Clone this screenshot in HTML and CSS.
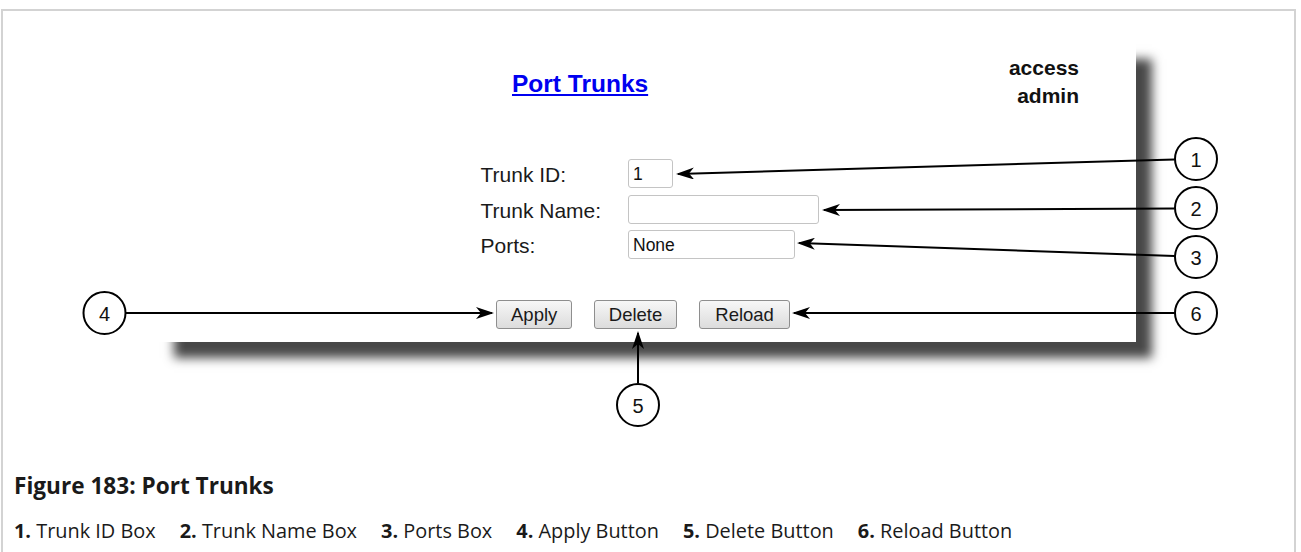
FILE: index.html
```html
<!DOCTYPE html>
<html lang="en">
<head>
    <meta charset="UTF-8">
    <meta name="viewport" content="width=device-width, initial-scale=1.0">
    <title>Port Trunks</title>
    <link rel="stylesheet" href="styles.css">
</head>
<body>
    <div class="figure">
        <!-- Screenshot of the web UI with numbered callouts -->
        <div class="shot">
            <div class="panel">
                <div class="panel-head">
                    <a class="page-title" href="#">Port Trunks</a>
                    <div class="user">access<br>admin</div>
                </div>

                <form class="trunk-form" action="#" method="post">
                    <div class="fields">
                        <label for="trunkId">Trunk ID:</label>
                        <input type="text" id="trunkId" name="trunkId" class="field field-id" value="1">

                        <label for="trunkName">Trunk Name:</label>
                        <input type="text" id="trunkName" name="trunkName" class="field field-name" value="">

                        <label for="ports">Ports:</label>
                        <input type="text" id="ports" name="ports" class="field field-ports" value="None">
                    </div>

                    <div class="actions">
                        <button type="submit" class="btn">Apply</button>
                        <button type="button" class="btn">Delete</button>
                        <button type="button" class="btn btn-reload">Reload</button>
                    </div>
                </form>
            </div>

            <svg class="callouts" width="1291" height="440" viewBox="0 0 1291 440">
                <defs>
                    <marker id="head" viewBox="0 0 18 12" refX="16" refY="6" markerWidth="18" markerHeight="12" markerUnits="userSpaceOnUse" orient="auto">
                        <path d="M0,0 L18,6 L0,12 L5,6 Z" fill="#000"/>
                    </marker>
                </defs>
                <g class="leaders">
                    <line x1="1171.5" y1="148.5" x2="675" y2="162.9" marker-end="url(#head)"/>
                    <line x1="1171.5" y1="197.5" x2="821" y2="199" marker-end="url(#head)"/>
                    <line x1="1171.5" y1="245" x2="796" y2="232.1" marker-end="url(#head)"/>
                    <line x1="123" y1="302" x2="489" y2="302" marker-end="url(#head)"/>
                    <line x1="635" y1="372" x2="635" y2="322" marker-end="url(#head)"/>
                    <line x1="1171.5" y1="302" x2="791" y2="302" marker-end="url(#head)"/>
                </g>
                <g class="bubbles">
                    <circle cx="1193" cy="148" r="21"/>
                    <circle cx="1193" cy="197" r="21"/>
                    <circle cx="1193" cy="246" r="21"/>
                    <circle cx="101.5" cy="302" r="21"/>
                    <circle cx="635" cy="394" r="21"/>
                    <circle cx="1193" cy="302" r="21"/>
                </g>
                <g class="numbers">
                    <text x="1193" y="149">1</text>
                    <text x="1193" y="198">2</text>
                    <text x="1193" y="247">3</text>
                    <text x="101.5" y="303">4</text>
                    <text x="635" y="395">5</text>
                    <text x="1193" y="303">6</text>
                </g>
            </svg>
        </div>

        <p class="caption">Figure 183: Port Trunks</p>
        <ul class="legend">
            <li><b>1.</b> Trunk ID Box</li>
            <li><b>2.</b> Trunk Name Box</li>
            <li><b>3.</b> Ports Box</li>
            <li><b>4.</b> Apply Button</li>
            <li><b>5.</b> Delete Button</li>
            <li><b>6.</b> Reload Button</li>
        </ul>
    </div>
</body>
</html>
```

FILE: styles.css
```css
body {
    margin: 0;
    background: #fff;
}
.figure {
    box-sizing: border-box;
    width: 1295px;
    height: 543px;
    margin: 9px 0 0 1px;
    border: 2px solid #d3d3d3;
    border-bottom: none;
}
.shot {
    position: relative;
    box-sizing: border-box;
    height: 440px;
    padding-top: 32px;
}
.panel {
    box-sizing: border-box;
    width: 978px;
    height: 299px;
    margin-left: 155px;
    padding-top: 11px;
    background: #fff;
    box-shadow: 16px 16px 10px rgba(0, 0, 0, 0.72);
    font-family: "Liberation Sans", Arial, sans-serif;
    color: #1a1a1a;
}
.panel-head {
    display: flex;
    align-items: flex-start;
}
.page-title {
    margin: 16px 0 0 354px;
    font-size: 24.5px;
    line-height: 28px;
    font-weight: bold;
    color: #0000f0;
    text-decoration: underline;
}
.user {
    margin-left: auto;
    margin-right: 57px;
    text-align: right;
    font-size: 21px;
    line-height: 28px;
    font-weight: bold;
    color: #111;
}
.fields {
    display: grid;
    grid-template-columns: 147.5px auto;
    grid-auto-rows: 29px;
    row-gap: 6.5px;
    align-items: start;
    justify-items: start;
    margin: 49px 0 0 322.5px;
}
.fields label {
    padding-top: 1px;
    font-size: 21px;
    line-height: 29px;
}
.field {
    box-sizing: border-box;
    height: 29px;
    margin: 0;
    padding: 1px 4px 0;
    border: 1px solid #c4c4c4;
    border-radius: 3px;
    background: #fff;
    font-family: "Liberation Sans", Arial, sans-serif;
    font-size: 17.5px;
    color: #111;
}
.field-id {
    width: 45px;
}
.field-name {
    width: 191px;
}
.field-ports {
    width: 167px;
}
.actions {
    display: flex;
    gap: 21.5px;
    margin: 41px 0 0 338px;
}
.btn {
    box-sizing: border-box;
    height: 29px;
    margin: 0;
    padding: 0 14px;
    border: 1px solid #8e8e8e;
    border-radius: 3px;
    background: linear-gradient(#f7f7f7, #dcdcdc);
    font-family: "Liberation Sans", Arial, sans-serif;
    font-size: 18.5px;
    color: #1a1a1a;
}
.btn-reload {
    padding: 0 15.5px;
}
.callouts {
    position: absolute;
    top: 0;
    left: 0;
    pointer-events: none;
}
.leaders line {
    stroke: #000;
    stroke-width: 2;
}
.bubbles circle {
    fill: #fff;
    stroke: #000;
    stroke-width: 2;
}
.numbers text {
    font-family: "Liberation Sans", Arial, sans-serif;
    font-size: 20px;
    text-anchor: middle;
    dominant-baseline: central;
    fill: #111;
}
.caption {
    margin: 20px 0 0;
    padding-left: 11px;
    font-family: "Open Sans", "Noto Sans", sans-serif;
    font-size: 22.6px;
    line-height: 30px;
    font-weight: bold;
    color: #1a1a1a;
}
.legend {
    display: flex;
    gap: 24px;
    margin: 17px 0 0;
    padding-left: 11px;
    list-style: none;
    font-family: "Open Sans", "Noto Sans", sans-serif;
    font-size: 19.9px;
    line-height: 26px;
    color: #1a1a1a;
}
```
